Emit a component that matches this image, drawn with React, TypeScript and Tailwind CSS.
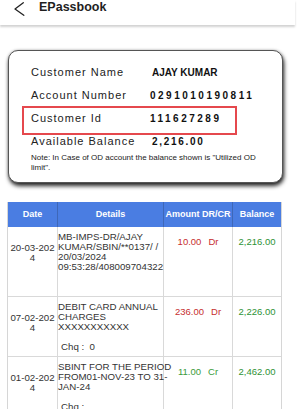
import React from 'react';

type Txn = {
  date: string;
  details: string[];
  chq: string | null;
  amount: string;
  type: 'Dr' | 'Cr';
  balance: string;
  height: string;
};

const txns: Txn[] = [
  {
    date: '20-03-2024',
    details: ['MB-IMPS-DR/AJAY', 'KUMAR/SBIN/**0137/ /', '20/03/2024', '09:53:28/408009704322'],
    chq: null,
    amount: '10.00',
    type: 'Dr',
    balance: '2,216.00',
    height: 'h-[70px]',
  },
  {
    date: '07-02-2024',
    details: ['DEBIT CARD ANNUAL', 'CHARGES', 'XXXXXXXXXXX'],
    chq: 'Chq :\u00a0 0',
    amount: '236.00',
    type: 'Dr',
    balance: '2,226.00',
    height: 'h-[60px]',
  },
  {
    date: '01-02-2024',
    details: ['SBINT FOR THE PERIOD', 'FROM01-NOV-23 TO 31-', 'JAN-24'],
    chq: 'Chq :',
    amount: '11.00',
    type: 'Cr',
    balance: '2,462.00',
    height: 'h-[70px]',
  },
];

function InfoRow({ label, value, valueClass }: { label: string; value: string; valueClass: string }) {
  return (
    <div className="flex h-[23px] items-center">
      <span className="w-[119px] text-[11px] tracking-[1px] text-[#222]">{label}</span>
      <span className={`text-[10px] font-bold text-[#111] ${valueClass}`}>{value}</span>
    </div>
  );
}

export default function App() {
  return (
    <div className="min-h-screen w-[300px] overflow-hidden bg-white font-['Liberation_Sans',Arial,sans-serif] text-[#222]">
      {/* Top bar */}
      <div className="flex h-[25px] w-[295px] items-start bg-white shadow-[0_1.5px_2px_rgba(0,0,0,0.18)]">
        <svg className="ml-[13px] mt-[1px]" width="12" height="16" viewBox="0 0 12 16" fill="none" stroke="#222" strokeWidth="1.3" strokeLinecap="round" strokeLinejoin="round">
          <polyline points="10.3,1.7 2,8 10.8,14.3" />
        </svg>
        <span className="ml-[14px] text-[12.5px] font-bold leading-[15px] text-[#1f1f1f]">EPassbook</span>
      </div>

      {/* Account card */}
      <div className="ml-[8px] mt-[25px] h-[133px] w-[275px] rounded-[10px] border border-[#555] bg-white pl-[22px] pr-[22px] pt-[10px] shadow-[1px_3px_4px_rgba(0,0,0,0.85),0_0_3px_rgba(0,0,0,0.25)]">
        <InfoRow label="Customer Name" value="AJAY KUMAR" valueClass="ml-[2px]" />
        <InfoRow label="Account Number" value="0291010190811" valueClass="tracking-[2.5px]" />
        <div className="relative">
          <InfoRow label="Customer Id" value="111627289" valueClass="tracking-[2.5px]" />
          <div className="absolute -left-[9px] -top-[1px] h-[29px] w-[215px] border-2 border-[#e5484d]" />
        </div>
        <InfoRow label="Available Balance" value="2,216.00" valueClass="ml-[2px] tracking-[1.7px]" />
        <p className="text-[8px] leading-[9.5px] text-[#222]">
          Note: In Case of OD account the balance shown is "Utilized OD limit".
        </p>
      </div>

      {/* Transactions table */}
      <div className="ml-[7px] mt-[19px] w-[275px] border-x border-[#d6d6d6]">
        <div className="grid h-[25px] grid-cols-[50px_106px_69px_48px] whitespace-nowrap bg-[#4a7de2] text-[9px] font-bold text-white">
          <div className="flex items-center justify-center border-r border-[#3e67b8]">Date</div>
          <div className="flex items-center justify-center border-r border-[#3e67b8]">Details</div>
          <div className="flex items-center justify-center border-r border-[#3e67b8]">Amount DR/CR</div>
          <div className="flex items-center justify-center">Balance</div>
        </div>

        {txns.map((t) => (
          <div key={t.date} className={`grid grid-cols-[50px_106px_69px_48px] border-b border-[#d9d9d9] ${t.height}`}>
            <div className="break-all border-r border-[#d9d9d9] pt-[16px] text-center text-[9.7px] leading-[10px] text-[#333]">
              {t.date}
            </div>
            <div className="border-r border-[#d9d9d9] pt-[5px] text-[9.7px] leading-[10px] text-[#333]">
              {t.details.map((line) => (
                <div key={line} className="whitespace-nowrap">{line}</div>
              ))}
              {t.chq && (
                <div className="mt-[10px] whitespace-pre pl-[3px]">{t.chq}</div>
              )}
            </div>
            <div
              className={`border-r border-[#d9d9d9] pt-[9px] text-center text-[9.5px] leading-[12px] ${
                t.type === 'Dr' ? 'text-[#c62f2f]' : 'text-[#3a9b3a]'
              }`}
            >
              <span>{t.amount}</span>
              <span className="ml-[7px]">{t.type}</span>
            </div>
            <div className="pt-[9px] text-center text-[9.5px] leading-[12px] text-[#2e9234]">{t.balance}</div>
          </div>
        ))}
      </div>
    </div>
  );
}
